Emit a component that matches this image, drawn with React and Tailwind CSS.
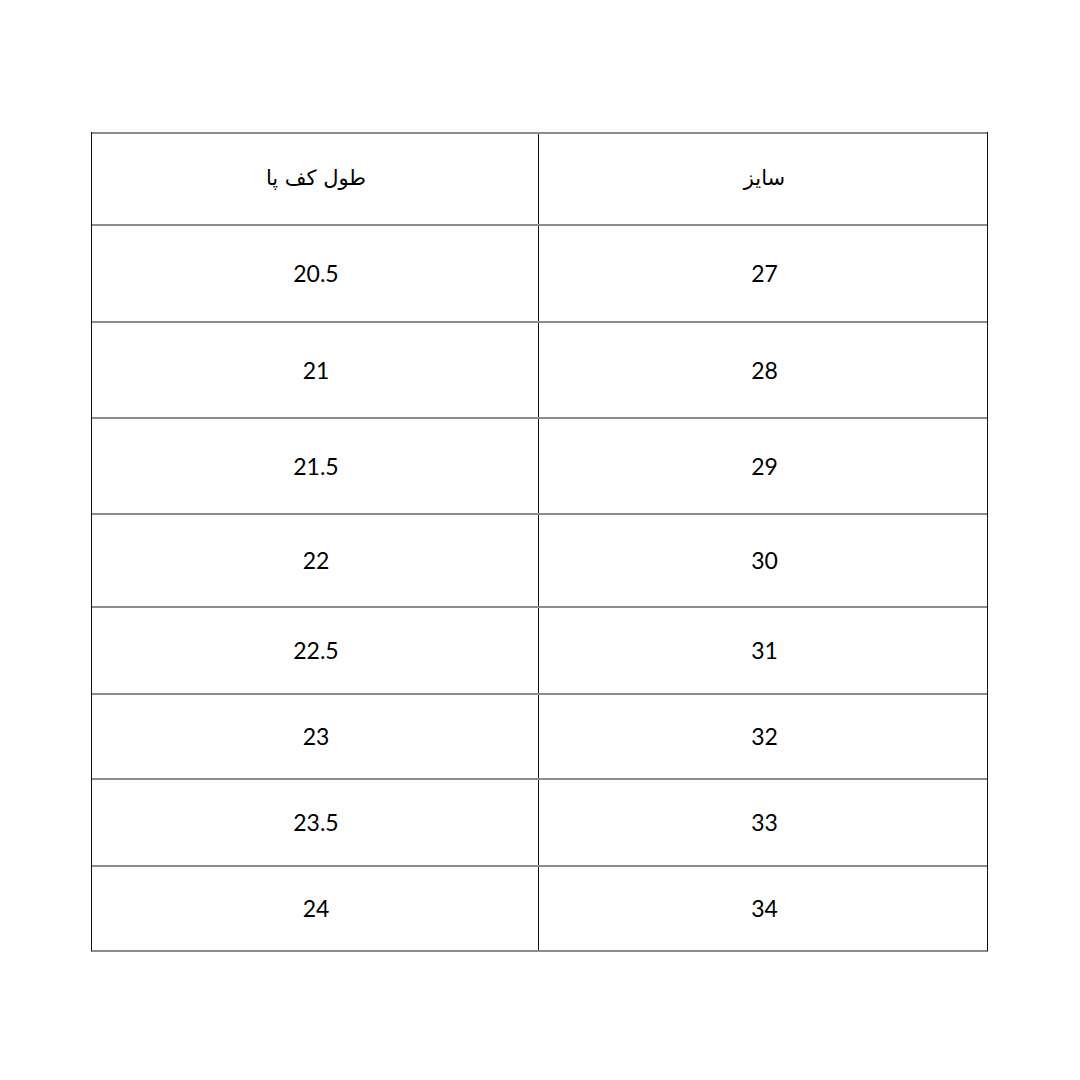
import React from "react";

const rows = [
  { len: "20.5", size: "27", h: "h-[97px]" },
  { len: "21", size: "28", h: "h-[96px]" },
  { len: "21.5", size: "29", h: "h-[96px]" },
  { len: "22", size: "30", h: "h-[93px]" },
  { len: "22.5", size: "31", h: "h-[87px]" },
  { len: "23", size: "32", h: "h-[85px]" },
  { len: "23.5", size: "33", h: "h-[87px]" },
  { len: "24", size: "34", h: "h-[85px]" },
];

function Row({ left, right, h, arabic }) {
  const font = arabic
    ? "font-['DejaVu_Sans',sans-serif] text-[21px]"
    : "font-['Lato','Open_Sans',sans-serif] text-[23px]";
  return (
    <div className={`flex ${h} border-t-2 border-[#8c8c8c] text-black`}>
      <div className={`flex-1 flex items-center justify-center border-r border-[#111] pl-[2px] ${font}`}>
        <span dir={arabic ? "rtl" : "ltr"}>{left}</span>
      </div>
      <div className={`w-[448px] flex items-center justify-center pl-[3px] ${font}`}>
        <span dir={arabic ? "rtl" : "ltr"}>{right}</span>
      </div>
    </div>
  );
}

export default function App() {
  return (
    <div className="w-[1080px] h-[1080px] bg-white pt-[132px] pl-[91px]">
      <div className="w-[897px] border-l border-r border-[#111] border-b-2 border-b-[#8c8c8c]">
        <Row left="طول کف پا" right="سایز" h="h-[92px]" arabic />
        {rows.map((r) => (
          <Row key={r.size} left={r.len} right={r.size} h={r.h} />
        ))}
      </div>
    </div>
  );
}
